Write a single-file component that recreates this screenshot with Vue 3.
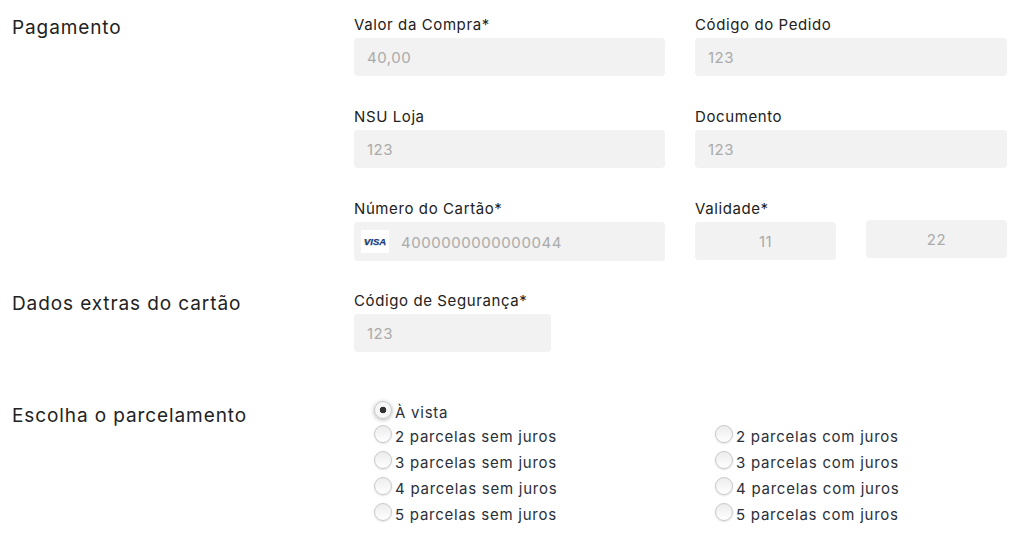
<script setup>
const installments = [2, 3, 4, 5];
</script>

<template>
  <div class="page">
    <section class="section first">
      <h2 class="sectionTitle">Pagamento</h2>
      <div class="fields">
        <div class="field">
          <label>Valor da Compra*</label>
          <input class="box" placeholder="40,00" disabled />
        </div>
        <div class="field">
          <label>Código do Pedido</label>
          <input class="box" placeholder="123" disabled />
        </div>
        <div class="field">
          <label>NSU Loja</label>
          <input class="box" placeholder="123" disabled />
        </div>
        <div class="field">
          <label>Documento</label>
          <input class="box" placeholder="123" disabled />
        </div>
        <div class="field">
          <label>Número do Cartão*</label>
          <div class="box cardBox">
            <span class="cardFlag"><span class="flagV">V</span>ISA</span>
            <span class="cardNumber">4000000000000044</span>
          </div>
        </div>
        <div class="field">
          <label>Validade*</label>
          <div class="validity">
            <input class="box short month" placeholder="11" disabled />
            <input class="box short year" placeholder="22" disabled />
          </div>
        </div>
      </div>
    </section>

    <section class="section second">
      <h2 class="sectionTitle">Dados extras do cartão</h2>
      <div class="field cvv">
        <label>Código de Segurança*</label>
        <input class="box" placeholder="123" disabled />
      </div>
    </section>

    <section class="section third">
      <h2 class="sectionTitle">Escolha o parcelamento</h2>
      <div class="options">
        <label class="option single">
          <input type="radio" name="parcelas" checked />
          <span>À vista</span>
        </label>
        <template v-for="n in installments" :key="n">
          <label class="option">
            <input type="radio" name="parcelas" />
            <span>{{ n }} parcelas sem juros</span>
          </label>
          <label class="option">
            <input type="radio" name="parcelas" />
            <span>{{ n }} parcelas com juros</span>
          </label>
        </template>
      </div>
    </section>
  </div>
</template>

<style>
html, body {
  background: #fff;
}
</style>

<style scoped>
.page {
  width: 1032px;
  height: 544px;
  overflow: hidden;
  box-sizing: border-box;
  padding: 16px 25px 0 12px;
  font-family: "Inter", "Noto Sans", sans-serif;
  color: #212121;
}

.section {
  display: grid;
  grid-template-columns: 342px 1fr;
}

.sectionTitle {
  margin: 1px 0 0;
  font-size: 19px;
  font-weight: 400;
  line-height: 22px;
  letter-spacing: 0.9px;
  color: #222;
}

.fields {
  display: grid;
  grid-template-columns: 311px 312px;
  column-gap: 30px;
  row-gap: 32px;
}

.field label {
  display: block;
  font-size: 15px;
  line-height: 18px;
  letter-spacing: 0.6px;
  margin-bottom: 4px;
}

.box {
  display: block;
  box-sizing: border-box;
  width: 100%;
  height: 38px;
  border: 0;
  border-radius: 4px;
  background: #f2f2f2;
  padding: 1px 13px 0;
  font-family: "Inter", sans-serif;
  font-size: 15px;
  letter-spacing: 0.5px;
  color: #aaa;
  margin: 0;
}

.box::placeholder {
  color: #aaa;
  opacity: 1;
}

.cardBox {
  display: flex;
  align-items: center;
  height: 39px;
  padding: 0 7px;
}

.cardFlag {
  display: flex;
  align-items: center;
  justify-content: center;
  width: 28px;
  height: 23px;
  background: #fff;
  font-family: "Liberation Sans", sans-serif;
  font-size: 9.5px;
  font-weight: 700;
  font-style: italic;
  letter-spacing: 0;
  color: #14387f;
  -webkit-text-stroke: 0.25px #14387f;
}

.flagV {
  text-shadow: -0.6px 0 rgba(230, 150, 40, 0.6);
}

.cardNumber {
  margin-left: 12px;
  padding-top: 1px;
  font-size: 15px;
  letter-spacing: 0.55px;
}

.validity {
  display: flex;
  gap: 30px;
  align-items: flex-start;
}

.short {
  width: 141px;
  text-align: center;
}

.short.year {
  margin-top: -2px;
}

.second {
  margin-top: 31px;
}

.cvv {
  width: 197px;
}

.third {
  margin-top: 52px;
}

.options {
  display: grid;
  grid-template-columns: 341px 300px;
  padding-left: 20px;
  margin-top: -3px;
}

.option {
  display: flex;
  align-items: center;
  height: 26px;
  gap: 3px;
  font-size: 15px;
  letter-spacing: 0.75px;
  color: #2a2f3a;
}

.option.single {
  grid-column: 1 / -1;
  height: 22px;
}

.option input {
  appearance: none;
  box-sizing: border-box;
  width: 18px;
  height: 18px;
  margin: -4px 0 0;
  border-radius: 50%;
  border: 1px solid #c9c9c9;
  background: linear-gradient(#ececec, #fff);
  box-shadow: 0 1px 2px rgba(0, 0, 0, 0.12);
}

.option input:checked {
  background: radial-gradient(circle, #333 0 3px, #f7f7f7 3.6px);
  box-shadow: 0 1px 4px rgba(0, 0, 0, 0.3);
}
</style>
